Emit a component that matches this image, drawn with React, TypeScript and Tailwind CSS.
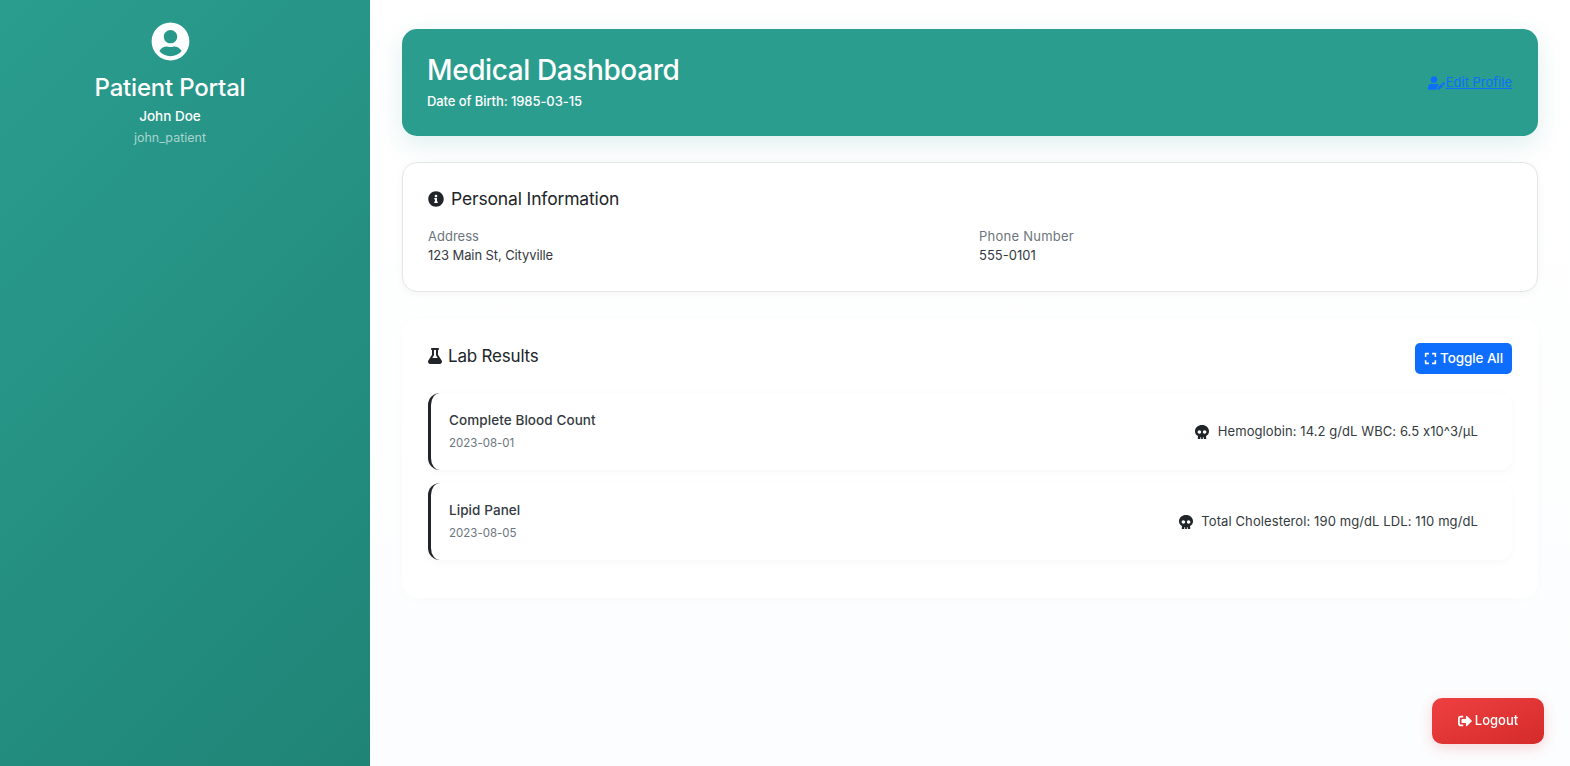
import { FaUserCircle, FaUserEdit, FaInfoCircle, FaFlask, FaExpand, FaSkull, FaSignOutAlt } from "react-icons/fa";

const labs = [
  { name: "Complete Blood Count", date: "2023-08-01", result: "Hemoglobin: 14.2 g/dL WBC: 6.5 x10^3/µL", gap: "gap-[9px] tracking-[0.08px]" },
  { name: "Lipid Panel", date: "2023-08-05", result: "Total Cholesterol: 190 mg/dL LDL: 110 mg/dL", gap: "gap-[8px] tracking-[0.1px]" },
];

export default function App() {
  return (
    <div className="flex h-[766px] overflow-hidden bg-gradient-to-b from-[#ffffff] to-[#fcfdfe] font-['Inter',sans-serif] text-[#212529] [font-feature-settings:'calt'_0]">
      <aside className="flex w-[370px] shrink-0 flex-col items-center bg-[linear-gradient(135deg,#2a9d8f,#1f8476)] pr-[30px] pt-[21px] text-white">
        <div className="flex h-[40px] w-[40px] items-center justify-center rounded-full">
          <FaUserCircle className="h-[39px] w-[39px] text-white" />
        </div>
        <h1 className="mt-[12px] text-[24px] leading-[29px] font-[550] tracking-[-0.2px]">Patient Portal</h1>
        <p className="mt-[4px] text-[13.5px] leading-[20px] font-medium">John Doe</p>
        <p className="mt-[2px] text-[12.5px] leading-[19px] text-white/60">john_patient</p>
      </aside>

      <main className="flex min-w-0 flex-1 flex-col pl-[32px] pr-[32px] pt-[29px]">
        <header className="flex h-[107px] items-center justify-between rounded-[15px] bg-[#2a9d8f] pl-[25px] pr-[26px] text-white shadow-[0_8px_24px_rgba(42,157,143,0.15)]">
          <div className="pb-[2px]">
            <h2 className="text-[28px] leading-[34px] font-[550] tracking-[-0.4px]">Medical Dashboard</h2>
            <p className="mt-[5px] text-[13px] leading-[19px] font-medium tracking-[-0.08px]">Date of Birth: 1985-03-15</p>
          </div>
          <a className="flex items-center gap-[1px] text-[13px] text-[#0d6efd] underline">
            <FaUserEdit className="h-[14px] w-[17px]" />
            Edit Profile
          </a>
        </header>

        <section className="mt-[26px] h-[130px] rounded-[15px] border border-[#e3e5e8] bg-white px-[25px] pt-[24px] shadow-[0_2px_8px_rgba(0,0,0,0.04)]">
          <h3 className="flex items-center gap-[7px] text-[17.5px] leading-[24px] font-normal tracking-[-0.15px]">
            <FaInfoCircle className="h-[16px] w-[16px]" />
            Personal Information
          </h3>
          <div className="mt-[16px] grid grid-cols-2 text-[13px] leading-[19px]">
            <div>
              <p className="text-[#6c757d]">Address</p>
              <p className="text-[#343a40] tracking-[-0.1px]">123 Main St, Cityville</p>
            </div>
            <div className="pl-[9px]">
              <p className="text-[#6c757d] tracking-[0.25px]">Phone Number</p>
              <p className="text-[#343a40]">555-0101</p>
            </div>
          </div>
        </section>

        <section className="mt-[27px] h-[279px] rounded-[15px] bg-white px-[26px] pt-[24px] shadow-[0_2px_12px_rgba(0,0,0,0.02)]">
          <div className="flex items-start justify-between">
            <h3 className="flex items-center gap-[6px] pt-[1px] text-[17px] leading-[24px] font-normal tracking-[-0.2px]">
              <FaFlask className="h-[16px] w-[14px]" />
              Lab Results
            </h3>
            <button className="flex h-[31px] w-[97px] items-center justify-center gap-[3px] rounded-[5px] bg-[#0d6efd] text-[13.5px] font-medium tracking-[-0.1px] text-white">
              <FaExpand className="h-[13px] w-[13px]" />
              Toggle All
            </button>
          </div>
          <div className="mt-[19px] flex flex-col gap-[13px]">
            {labs.map((l) => (
              <div key={l.name} className="flex h-[77px] items-center justify-between rounded-[12px] border-l-[3px] border-[#212529] bg-white pl-[18px] pr-[34px] shadow-[0_2px_8px_rgba(0,0,0,0.03)]">
                <div className="-mt-[2px]">
                  <p className="text-[13.5px] leading-[20px] font-medium tracking-[0.08px] text-[#343a40]">{l.name}</p>
                  <p className="mt-[4px] text-[11.5px] leading-[18px] text-[#6c757d]">{l.date}</p>
                </div>
                <div className={"flex items-center text-[13px] text-[#343a40] " + l.gap}>
                  <FaSkull className="h-[14px] w-[14px] text-[#212529]" />
                  {l.result}
                </div>
              </div>
            ))}
          </div>
        </section>
      </main>

      <button className="fixed bottom-[22px] right-[26px] flex h-[46px] w-[112px] items-center justify-center gap-[3px] rounded-[10px] bg-gradient-to-br from-[#ef4040] to-[#d42a2a] text-[13px] font-medium text-white shadow-[0_4px_14px_rgba(220,53,69,0.2)]">
        <FaSignOutAlt className="h-[14px] w-[14px]" />
        Logout
      </button>
    </div>
  );
}
